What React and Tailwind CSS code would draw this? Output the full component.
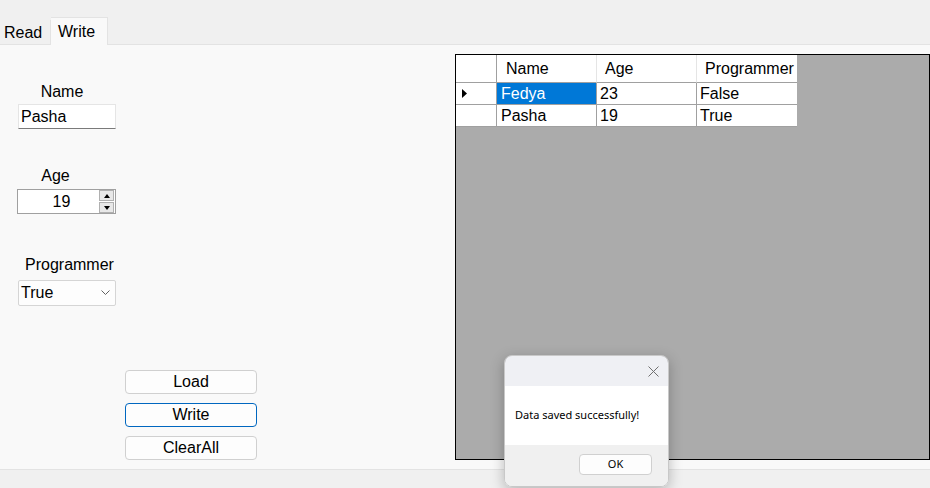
import React from 'react';

const rows = [
  { name: 'Fedya', age: '23', prog: 'False', current: true },
  { name: 'Pasha', age: '19', prog: 'True', current: false },
];

const Btn = ({ children, focused }) => (
  <button
    className={`w-[132px] h-[24px] rounded-[4px] border bg-[#fdfdfd] text-[16px] leading-none text-black flex items-center justify-center ${
      focused ? 'border-[#0067c0]' : 'border-[#d0d0d0]'
    }`}
  >
    {children}
  </button>
);

export default function App() {
  return (
    <div
      className="relative w-[930px] h-[488px] bg-[#f0f0f0] overflow-hidden text-black"
      style={{ fontFamily: '"Liberation Sans", Arial, sans-serif' }}
    >
      {/* tabs */}
      <div className="h-[44px] flex items-end">
        <div className="w-[51px] h-[24px] flex items-center pl-[4px] text-[16px] leading-none pt-[1px] border-r border-[#e3e3e3]">Read</div>
        <div className="w-[57px] h-[28px] flex items-center pl-[7px] text-[16px] leading-none bg-[#f9f9f9] border-t border-r border-[#e3e3e3] -mb-px relative z-10">
          Write
        </div>
      </div>

      {/* tab page */}
      <div className="h-[426px] bg-[#f9f9f9] border-t border-b border-[#e3e3e3] flex">
        <div className="w-[455px] flex flex-col pt-[38px]">
          <div className="w-[98px] ml-[18px] flex flex-col items-center">
            <span className="text-[16px] leading-[18px] ml-[-10px]">Name</span>
            <div className="mt-[3px] w-[98px] h-[25px] bg-white border border-[#e5e5e5] border-b-[#7a7a7a] flex items-center pl-[2px] text-[16px] self-start">
              Pasha
            </div>
          </div>

          <div className="w-[99px] ml-[17px] mt-[38px] flex flex-col items-center">
            <span className="text-[16px] leading-[18px] ml-[-22px]">Age</span>
            <div className="mt-[4px] w-[99px] h-[25px] bg-white border border-[#a0a0a0] flex items-center">
              <span className="flex-1 text-center text-[16px] pl-[6px]">19</span>
              <div className="w-[15px] h-[23px] mr-[1px] flex flex-col gap-px">
                <div className="flex-1 bg-[#e8e8e8] border border-[#b0b0b0] flex items-center justify-center">
                  <svg width="6" height="4" viewBox="0 0 6 4"><path d="M0 4 L3 0 L6 4 Z" fill="#000" /></svg>
                </div>
                <div className="flex-1 bg-[#e8e8e8] border border-[#b0b0b0] flex items-center justify-center">
                  <svg width="6" height="4" viewBox="0 0 6 4"><path d="M0 0 L6 0 L3 4 Z" fill="#000" /></svg>
                </div>
              </div>
            </div>
          </div>

          <div className="w-[98px] ml-[18px] mt-[42px] flex flex-col">
            <span className="text-[16px] leading-[18px] ml-[7px]">Programmer</span>
            <div className="mt-[6px] w-[98px] h-[26px] rounded-[2px] bg-[#fdfdfd] border border-[#d5d5d5] flex items-center justify-between pl-[2px] pr-[5px] text-[16px]">
              <span>True</span>
              <svg width="9" height="6" viewBox="0 0 9 6"><path d="M0.5 0.5 L4.5 4.5 L8.5 0.5" stroke="#606060" fill="none" strokeWidth="1" /></svg>
            </div>
          </div>

          <div className="ml-[125px] mt-[64px] flex flex-col gap-[9px]">
            <Btn>Load</Btn>
            <Btn focused>Write</Btn>
            <Btn>ClearAll</Btn>
          </div>
        </div>

        {/* data grid */}
        <div className="mt-[9px] w-[475px] h-[406px] bg-[#ababab] border border-black">
          <div className="grid grid-cols-[41px_100px_100px_100px] w-[341px] bg-white text-[16px]">
            <div className="h-[28px] border-r border-b border-[#a0a0a0]" />
            <div className="h-[28px] border-r border-b border-r-[#e5e5e5] border-b-[#a0a0a0] flex items-center pl-[9px] pt-px">Name</div>
            <div className="h-[28px] border-r border-b border-r-[#e5e5e5] border-b-[#a0a0a0] flex items-center pl-[8px] pt-px">Age</div>
            <div className="h-[28px] border-b border-[#a0a0a0] flex items-center pl-[8px] pt-px">Programmer</div>
            {rows.map((r) => (
              <React.Fragment key={r.name}>
                <div className="h-[22px] border-r border-b border-[#a0a0a0] flex items-center pl-[6px]">
                  {r.current && (
                    <svg width="5" height="9" viewBox="0 0 5 9"><path d="M0 0 L5 4.5 L0 9 Z" fill="#000" /></svg>
                  )}
                </div>
                <div className={`h-[22px] border-r border-b border-[#a0a0a0] flex items-center pl-[4px] pt-px ${r.current ? 'bg-[#0078d7] text-white' : ''}`}>
                  {r.name}
                </div>
                <div className="h-[22px] border-r border-b border-[#a0a0a0] flex items-center pl-[3px] pt-px">{r.age}</div>
                <div className="h-[22px] border-b border-[#a0a0a0] flex items-center pl-[3px] pt-px">{r.prog}</div>
              </React.Fragment>
            ))}
          </div>
        </div>
      </div>

      {/* message box */}
      <div
        className="absolute left-[504px] top-[355px] w-[165px] h-[132px] rounded-[8px] overflow-hidden border border-[#c8c8c8] shadow-[0_4px_14px_rgba(0,0,0,0.25)] flex flex-col"
        style={{ fontFamily: '"Noto Sans", "Open Sans", sans-serif' }}
      >
        <div className="h-[30px] bg-[#eff0f4] flex items-center justify-end pr-[9px]">
          <svg width="11" height="11" viewBox="0 0 11 11"><path d="M0.5 0.5 L10.5 10.5 M10.5 0.5 L0.5 10.5" stroke="#707070" strokeWidth="1" /></svg>
        </div>
        <div className="h-[59px] bg-white flex items-center pl-[10px] text-[11px] text-black">Data saved successfully!</div>
        <div className="flex-1 bg-[#f0f0f0] flex justify-end pt-[9px] pr-[16px]">
          <div className="w-[73px] h-[21px] rounded-[4px] border border-[#d0d0d0] bg-[#fdfdfd] flex items-center justify-center text-[11px]">OK</div>
        </div>
      </div>
    </div>
  );
}
